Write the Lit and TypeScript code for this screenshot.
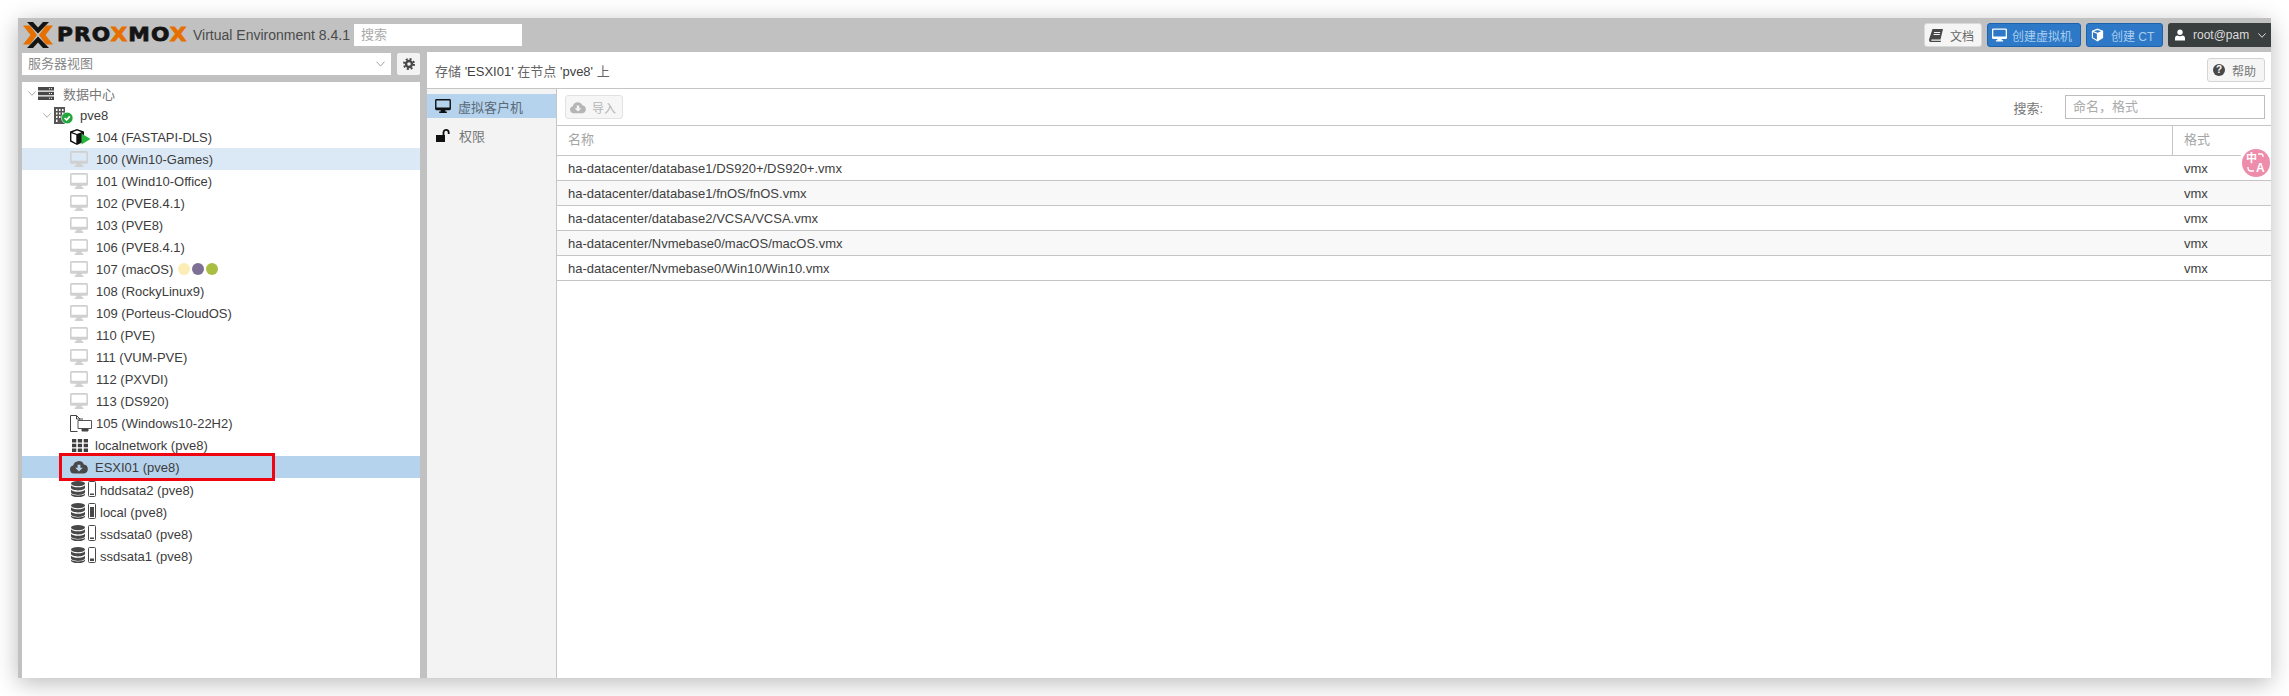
import { LitElement, html, css, nothing } from "lit";
import { customElement } from "lit/decorators.js";

const monitor = (w: number, h: number, color: string) => html`<svg width=${w} height=${h} viewBox="0 0 17 15" fill=${color}><path fill-rule="evenodd" d="M1.5 0h14A1.5 1.5 0 0 1 17 1.5v9a1.500 1.500 0 0 1-1.5 1.5H11v1.4h1.6V15H4.400v-1.6H6V12H1.5A1.5 1.5 0 0 1 0 10.500v-9A1.5 1.5 0 0 1 1.5 0zM1.500 1.500v7.700h14V1.500z"/></svg>`;
const cloud = (w: number, h: number, color: string) => html`<svg width=${w} height=${h} viewBox="0 0 18 14" fill=${color}><path fill-rule="evenodd" d="M4 13.5A4 4 0 0 1 3.2 5.6 5.6 5.6 0 0 1 13.8 4.4 4.6 4.6 0 0 1 14 13.5zM7.6 4.8v3H5.2L9 11.6l3.8-3.8h-2.4v-3z"/></svg>`;
const chevron = html`<svg width="8" height="5" viewBox="0 0 8 5" fill="none" stroke="#999" stroke-width=".8"><path d="M.4.4 4 4.3 7.6.4"/></svg>`;
const storage = (level: number) => html`<svg width="25" height="16" viewBox="0 0 25 16">
  <g fill="#484848"><ellipse cx="7" cy="2.6" rx="7" ry="2.6"/><path d="M0 4.2c1.4 1.4 3.8 2 7 2s5.6-.6 7-2v2.6c0 1.4-3 2.6-7 2.6S0 8.2 0 6.8z"/><path d="M0 8.7c1.4 1.4 3.8 2 7 2s5.6-.6 7-2v2.6c0 1.4-3 2.6-7 2.6S0 12.7 0 11.3z"/><path d="M0 12.8c1.4 1.2 3.8 1.7 7 1.7s5.6-.5 7-1.7v.6c0 1.4-3 2.6-7 2.6s-7-1.2-7-2.6z"/></g>
  <rect x="17.5" y=".5" width="7" height="15" rx="1" fill="none" stroke="#484848"/>
  <rect x="19" y=${14 - level} width="4" height=${level} fill="#484848"/>
</svg>`;

type Row = { label: string; kind: string };
const vms = ["100 (Win10-Games)", "101 (Wind10-Office)", "102 (PVE8.4.1)", "103 (PVE8)", "106 (PVE8.4.1)", "107 (macOS)", "108 (RockyLinux9)", "109 (Porteus-CloudOS)", "110 (PVE)", "111 (VUM-PVE)", "112 (PXVDI)", "113 (DS920)"];
const rows: Row[] = [
  { label: "数据中心", kind: "dc" },
  { label: "pve8", kind: "node" },
  { label: "104 (FASTAPI-DLS)", kind: "ct" },
  ...vms.map((label) => ({ label, kind: "vm" })),
  { label: "105 (Windows10-22H2)", kind: "tpl" },
  { label: "localnetwork (pve8)", kind: "net" },
  { label: "ESXI01 (pve8)", kind: "esxi" },
  { label: "hddsata2 (pve8)", kind: "s2" },
  { label: "local (pve8)", kind: "s9" },
  { label: "ssdsata0 (pve8)", kind: "s2" },
  { label: "ssdsata1 (pve8)", kind: "s3" },
];
const files = [
  "ha-datacenter/database1/DS920+/DS920+.vmx",
  "ha-datacenter/database1/fnOS/fnOS.vmx",
  "ha-datacenter/database2/VCSA/VCSA.vmx",
  "ha-datacenter/Nvmebase0/macOS/macOS.vmx",
  "ha-datacenter/Nvmebase0/Win10/Win10.vmx",
];

@customElement("app-root")
export class AppRoot extends LitElement {
  static styles = css`
    :host { display: block; height: 696px; box-sizing: border-box; padding: 18px; background: #fff; overflow: hidden;
      font: 13px "Liberation Sans", "Noto Sans CJK SC", sans-serif; color: #3c3c3c; }
    svg { display: block; flex: none; }
    .win { position: relative; height: 660px; background: #c1c1c1; display: flex; flex-direction: column; overflow: hidden; box-shadow: 0 5px 22px rgba(0,0,0,.27); }
    .top { height: 34px; flex: none; display: flex; align-items: center; }
    .logo { display: flex; align-items: center; margin-left: 5px; }
    .word { margin-left: 4px; width: 133px; font: 700 19.5px "DejaVu Sans", sans-serif; letter-spacing: 1px; color: #141414; -webkit-text-stroke: .8px currentColor; white-space: nowrap; line-height: 34px; transform: scaleX(1.11); transform-origin: left center; }
    .word b { color: #e57000; font-weight: 700; }
    .ver { margin-left: 3px; font-size: 14px; color: #4a4a4a; white-space: nowrap; width: 157px; }
    .gsearch { margin-left: 4px; width: 168px; height: 22px; background: #fff; color: #aaa; box-sizing: border-box; padding: 0 7px; line-height: 22px; }
    .sp { flex: 1; }
    .tb { height: 24px; box-sizing: border-box; border-radius: 3px; display: flex; align-items: center; margin-left: 5px; white-space: nowrap; font-size: 12px; }
    .doc { width: 58px; background: #f5f5f5; border: 1px solid #d9d9d9; padding-left: 4px; color: #666; gap: 7px; }
    .blue { background: #2d79c7; border: 1px solid #1c62ad; color: #a9cdef; padding-left: 4px; }
    .vmb { width: 94px; gap: 5px; }
    .ctb { width: 77px; gap: 7px; }
    .user { width: 103px; background: #393e3e; color: #dcdcdc; border-radius: 3px 0 0 3px; padding-left: 7px; gap: 8px; }
    .user .chev { margin-left: 1px; }
    .main { flex: 1; display: flex; min-height: 0; }
    .left { width: 409px; box-sizing: border-box; padding: 1px 7px 0 4px; display: flex; flex-direction: column; flex: none; }
    .combo-row { display: flex; height: 22px; gap: 6px; flex: none; }
    .combo { flex: 1; background: #fff; color: #888; line-height: 22px; padding: 0 6px; display: flex; align-items: center; justify-content: space-between; }
    .gear { width: 23px; background: #f3f3f3; border-radius: 2px; display: flex; align-items: center; justify-content: center; }
    .tree { flex: 1; margin-top: 7px; background: #fff; }
    .row { height: 22px; display: flex; align-items: center; white-space: nowrap; padding-left: 48px; }
    .row.hover { background: #dbe9f6; }
    .row.sel { background: #b5d3ed; }
    .row.l0 { padding-left: 6px; color: #777; }
    .row.l1 { padding-left: 21px; }
    .row.st .lbl { padding-top: 2px; }
    .twist { width: 8px; margin-right: 2px; flex: none; }
    .ic { width: 18px; margin-right: 8px; display: flex; justify-content: flex-start; flex: none; }
    .ic-dc { width: 17px; margin-right: 8px; }
    .ic-node { width: 19px; margin-right: 7px; margin-left: 1px; }
    .ic-st { width: 25px; margin-right: 4px; margin-left: 1px; }
    .ic-net { margin-right: 7px; margin-left: 2px; width: 16px; }
    .ic-esxi { margin-right: 7px; width: 18px; }
    .dots { display: flex; gap: 2px; margin-left: 5px; }
    .dot { width: 12px; height: 12px; border-radius: 50%; }
    .d1 { background: #fbedb5; } .d2 { background: #7e6f95; } .d3 { background: #a9bd42; }
    .mark { position: absolute; left: 41px; top: 435px; width: 216px; height: 28px; box-sizing: border-box; border: 3px solid #ee0510; pointer-events: none; }
    .right { flex: 1; background: #fff; display: flex; flex-direction: column; min-width: 0; }
    .title { height: 36px; flex: none; display: flex; align-items: center; justify-content: space-between; padding: 0 6px 0 8px; border-bottom: 1px solid #c5c5c5; color: #666; }
    .title span span { color: #3f3f3f; }
    .help { width: 58px; height: 24px; box-sizing: border-box; border: 1px solid #d4d4d4; background: #f5f5f5; border-radius: 3px; display: flex; align-items: center; padding-left: 5px; gap: 7px; color: #777; font-size: 12px; }
    .q { width: 12px; height: 12px; border-radius: 50%; background: #484848; color: #fff; font: 700 10px/12px "Liberation Sans", sans-serif; text-align: center; }
    .body { flex: 1; display: flex; min-height: 0; }
    .nav { width: 129px; flex: none; background: #f3f3f3; border-right: 1px solid #c5c5c5; padding-top: 5px; display: flex; flex-direction: column; gap: 5px; }
    .ni { height: 24px; display: flex; align-items: center; padding-left: 8px; color: #777; }
    .ni.on { background: #b5d3ed; color: #5a6a78; }
    .ni svg { margin-right: 7px; }
    .ni .lock { margin: 0 9px 0 1px; }
    .content { flex: 1; min-width: 0; display: flex; flex-direction: column; }
    .bar { height: 37px; flex: none; box-sizing: border-box; border-bottom: 1px solid #c5c5c5; display: flex; align-items: center; padding: 0 6px 0 8px; }
    .imp { width: 58px; height: 24px; box-sizing: border-box; border: 1px solid #e2e2e2; border-radius: 3px; background: #f6f6f6; display: flex; align-items: center; padding-left: 4px; gap: 6px; color: #b5b5b5; font-size: 12px; }
    .lab { margin-left: auto; color: #777; margin-right: 22px; }
    .filter { width: 200px; height: 24px; box-sizing: border-box; border: 1px solid #bdbdbd; color: #aaa; padding: 0 7px; line-height: 22px; }
    .grid { display: grid; grid-template-columns: 1fr 99px; }
    .th { height: 30px; box-sizing: border-box; border-bottom: 1px solid #c5c5c5; color: #a5a5a5; line-height: 28px; padding-left: 11px; }
    .th + .th { border-left: 1px solid #c5c5c5; }
    .td { height: 25px; box-sizing: border-box; border-bottom: 1px solid #c5c5c5; padding: 1px 0 0 11px; line-height: 24px; color: #404040; }
    .td.alt { background: #f8f8f8; }
    .td.fmt { padding-left: 12px; }
    .badge { position: absolute; left: 2221px; top: 128px; width: 34px; height: 34px; border-radius: 50%; background: #fff; display: flex; align-items: center; justify-content: center; }
    .pink { position: relative; width: 28px; height: 28px; border-radius: 50%; background: #ee8dab; color: #fff; }
    .pink svg { position: absolute; left: 0; top: 0; }
    .zh { position: absolute; left: 4px; top: 3px; font-size: 11px; line-height: 12px; font-weight: 700; }
    .en { position: absolute; left: 14px; top: 13px; font-size: 12px; line-height: 12px; font-weight: 700; }
  `;

  icon(kind: string) {
    switch (kind) {
      case "dc": return html`<span class="twist">${chevron}</span><span class="ic ic-dc"><svg width="16" height="13" viewBox="0 0 16 13" fill="#484848"><path fill-rule="evenodd" d="M0 0h16v3.6H0zM0 4.7h16v3.6H0zM0 9.4h16V13H0zM11 1.3v1h1v-1zM13 1.3v1h1v-1zM11 6v1h1V6zM13 6v1h1V6zM11 10.7v1h1v-1zM13 10.7v1h1v-1z"/></svg></span>`;
      case "node": return html`<span class="twist">${chevron}</span><span class="ic ic-node"><svg width="19" height="17" viewBox="0 0 19 17"><path fill="#555" fill-rule="evenodd" d="M0 0h11v17H0zM2 2v2h1.5V2zM5 2v2h1.5V2zM8 2v2h1.5V2zM2 5.5v2h1.5v-2zM5 5.5v2h1.5v-2zM8 5.5v2h1.5v-2zM2 9v2h1.5V9zM5 9v2h1.5V9zM2 12.5V15h1.5v-2.5z"/><circle cx="13.2" cy="11" r="5.8" fill="#21a63c" stroke="#fff" stroke-width=".6"/><path d="M10.6 11l2 2 3.2-3.6" fill="none" stroke="#fff" stroke-width="1.7"/></svg></span>`;
      case "ct": return html`<span class="ic"><svg width="21" height="16" viewBox="0 0 21 16"><path fill="#111" fill-rule="evenodd" d="M7 0l7 2.6v9.8L7 16 0 12.4V2.6zM7 1.6L2.5 3.2 7 5l4.5-1.8zM1.4 4.2v7.4l4.9 2.6V6.1z"/><path d="M11.5 4.5 20.5 10l-9 5.5z" fill="#24b53c"/></svg></span>`;
      case "vm": return html`<span class="ic">${monitor(18, 16, "#d0d0d0")}</span>`;
      case "tpl": return html`<span class="ic"><svg width="22" height="17" viewBox="0 0 22 17" fill="none" stroke="#444"><path d="M.5.5h6l3.5 3.5M.5.5v16h7"/><path d="M6.5.5V4H10"/><path d="M8 5.5h13.500v8H8z" stroke="#555"/><path d="M9 4h4"/><path d="M12 14h6v2h-6z" fill="#444"/></svg></span>`;
      case "net": return html`<span class="ic ic-net"><svg width="16" height="13" viewBox="0 0 16 13" fill="#3f3f3f"><path d="M0 0h4.3v3.6H0zM5.8 0h4.3v3.6H5.8zM11.7 0H16v3.6h-4.3zM0 4.7h4.3v3.6H0zM5.8 4.7h4.3v3.6H5.8zM11.7 4.7H16v3.6h-4.3zM0 9.4h4.3V13H0zM5.8 9.4h4.3V13H5.8zM11.7 9.4H16V13h-4.3z"/></svg></span>`;
      case "esxi": return html`<span class="ic ic-esxi">${cloud(18, 14, "#484848")}</span>`;
      default: return html`<span class="ic ic-st">${storage(kind === "s9" ? 10 : kind === "s3" ? 2.5 : 1.5)}</span>`;
    }
  }

  render() {
    return html`<div class="win">
      <header class="top">
        <div class="logo">
          <svg width="30" height="26" viewBox="0 0 30 26">
            <path fill="#141414" d="M4 0h6l5 5.500L20 0h6L15 11.500zM4 26h6l5-5.500 5 5.500h6L15 14.500z"/>
            <path fill="#e57000" d="M0 3.500h7L14 13 7 22.500H0L7.500 13zM30 3.500h-7L16 13l7 9.500h7L22.500 13z"/>
          </svg>
          <div class="word">PRO<b>X</b>MO<b>X</b></div>
        </div>
        <div class="ver">Virtual Environment 8.4.1</div>
        <div class="gsearch">搜索</div>
        <div class="sp"></div>
        <div class="tb doc"><svg width="14" height="13" viewBox="0 0 14 13" fill="#484848"><path fill-rule="evenodd" d="M3.500 0H14l-2.500 10.500H2.700a1 1 0 0 0-.3 1.300H12L11.700 13H2C.5 13-.3 11.500.2 10zM5 3v1h6.200V3zM4.600 5v1h6.200V5z"/></svg>文档</div>
        <div class="tb blue vmb">${monitor(15, 14, "#fff")}创建虚拟机</div>
        <div class="tb blue ctb"><svg width="13" height="14" viewBox="0 0 15 15"><path fill="#fff" fill-rule="evenodd" d="M7.500 0L14 2.500v8.500l-6.500 4L1 11V2.500zM7.500 1.700L3.300 3.200l4.200 1.700 4.200-1.700zM2.300 4.300v6l4.500 2.800V6.200z"/></svg>创建 CT</div>
        <div class="tb user"><svg width="10" height="12" viewBox="0 0 12 13" fill="#fff"><circle cx="6" cy="3.200" r="3.200"/><path d="M0 13v-3c0-2 1.500-3 3-3 1 .6 2 1 3 1s2-.4 3-1c1.500 0 3 1 3 3v3z"/></svg>root@pam<span class="chev"><svg width="8" height="5" viewBox="0 0 8 5" fill="none" stroke="#ddd"><path d="M.4.4 4 4.300 7.600.4"/></svg></span></div>
      </header>
      <div class="main">
        <aside class="left">
          <div class="combo-row">
            <div class="combo">服务器视图<svg width="9" height="6" viewBox="0 0 8 5" fill="none" stroke="#999" stroke-width=".8"><path d="M.4.4 4 4.300 7.600.4"/></svg></div>
            <div class="gear"><svg width="12" height="12" viewBox="0 0 12 12" fill="none" stroke="#484848"><circle cx="6" cy="6" r="3" stroke-width="2.400"/><circle cx="6" cy="6" r="5" stroke-width="2" stroke-dasharray="2 1.930"/></svg></div>
          </div>
          <div class="tree">
            ${rows.map((r) => html`<div class="row ${r.kind === "dc" ? "l0" : r.kind === "node" ? "l1" : ""} ${r.label.startsWith("100") ? "hover" : ""} ${r.kind === "esxi" ? "sel" : ""} ${/^s\d/.test(r.kind) ? "st" : ""}">
              ${this.icon(r.kind)}<span class="lbl">${r.label}</span>
              ${r.label.startsWith("107") ? html`<span class="dots"><span class="dot d1"></span><span class="dot d2"></span><span class="dot d3"></span></span>` : nothing}
            </div>`)}
          </div>
        </aside>
        <section class="right">
          <div class="title"><span>存储 <span>'ESXI01'</span> 在节点 <span>'pve8'</span> 上</span>
            <div class="help"><span class="q">?</span>帮助</div></div>
          <div class="body">
            <nav class="nav">
              <div class="ni on">${monitor(16, 14, "#111")}虚拟客户机</div>
              <div class="ni"><svg class="lock" width="14" height="13" viewBox="0 0 14 13"><path fill="#111" d="M0 6h9v7H0z"/><path fill="none" stroke="#111" stroke-width="1.800" d="M7.500 6V3.500a2.600 2.600 0 0 1 5.200 0V5"/></svg>权限</div>
            </nav>
            <div class="content">
              <div class="bar">
                <div class="imp">${cloud(16, 13, "#b5b5b5")}导入</div>
                <span class="lab">搜索:</span>
                <div class="filter">命名，格式</div>
              </div>
              <div class="grid">
                <div class="th">名称</div><div class="th">格式</div>
                ${files.map((f, i) => html`<div class="td ${i % 2 ? "alt" : ""}">${f}</div><div class="td fmt ${i % 2 ? "alt" : ""}">vmx</div>`)}
              </div>
            </div>
          </div>
        </section>
      </div>
      <div class="mark"></div>
      <div class="badge"><div class="pink"><svg width="28" height="28" viewBox="0 0 28 28" fill="none" stroke="#fff" stroke-width="1.300"><path d="M16 5h3a2 2 0 0 1 2 2v1M6 18v1a3 3 0 0 0 3 3h3"/></svg><span class="zh">中</span><span class="en">A</span></div></div>
    </div>`;
  }
}
